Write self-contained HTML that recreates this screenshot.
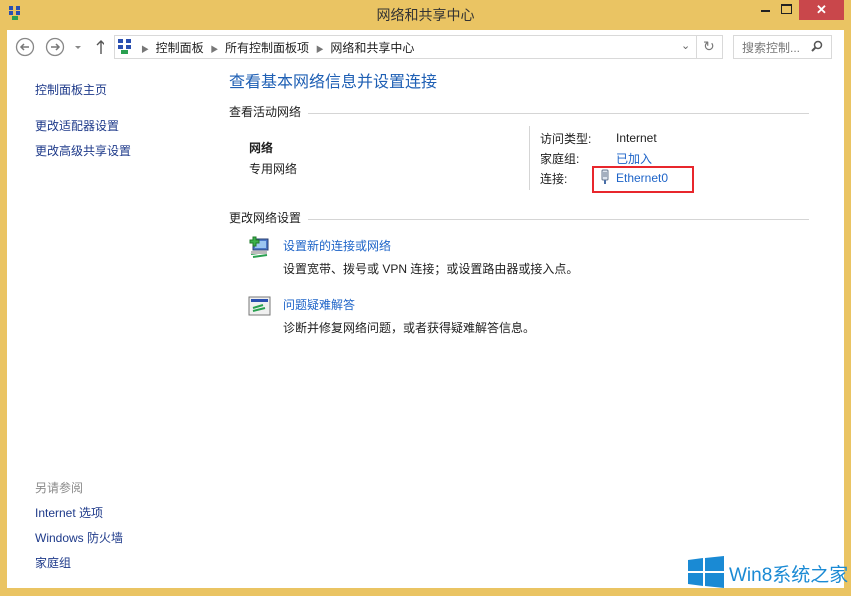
<!DOCTYPE html>
<html><head><meta charset="utf-8"><style>
body{margin:0;width:851px;height:596px;background:#eac463;position:relative;overflow:hidden;font-family:"Liberation Sans","Microsoft YaHei","Noto Sans CJK SC",sans-serif;font-size:12px;color:#1e1e1e}
.a{position:absolute;white-space:nowrap}
#client{position:absolute;left:7px;top:30px;width:837px;height:558px;background:#fff}
.blue{color:#1e64c8}
.nav{color:#1e3a8a;font-size:12px}
.hr{position:absolute;height:1px;background:#d5d5d5}
</style></head><body>
<div class="a" style="left:8px;top:5px;width:14px;height:16px">
<svg width="14" height="16"><rect x="1" y="1" width="4" height="4" fill="#2a4fb0"/><rect x="8" y="1" width="4" height="4" fill="#2a4fb0"/><rect x="1" y="6" width="4" height="4" fill="#2a4fb0"/><rect x="8" y="6" width="4" height="4" fill="#2a4fb0"/><rect x="4" y="11" width="6" height="4" fill="#2aa050"/></svg></div>
<div class="a" style="left:0;width:851px;top:5px;text-align:center;font-size:14px;color:#333">网络和共享中心</div>
<div class="a" style="left:761px;top:10px;width:9px;height:2px;background:#222"></div>
<div class="a" style="left:781px;top:4px;width:9px;height:7px;border:1px solid #222;border-top-width:2px"></div>
<div class="a" style="left:799px;top:0;width:45px;height:20px;background:#c9474b;color:#fff;text-align:center;font-size:13px;line-height:19px;font-weight:bold">✕</div>
<div id="client"></div>
<svg class="a" style="left:14px;top:36px" width="90" height="22"><circle cx="11" cy="11" r="8.5" fill="none" stroke="#888" stroke-width="1.3"/><path d="M15 11H7M10 8L7 11L10 14" fill="none" stroke="#777" stroke-width="1.5"/><circle cx="41" cy="11" r="8.5" fill="none" stroke="#888" stroke-width="1.3"/><path d="M37 11H45M42 8L45 11L42 14" fill="none" stroke="#777" stroke-width="1.5"/><path d="M61 10h6l-3 3z" fill="#888"/><path d="M87 18V5M83 9L87 5L91 9" fill="none" stroke="#555" stroke-width="1.4"/></svg>
<div class="a" style="left:114px;top:35px;width:607px;height:22px;border:1px solid #d9d9d9"></div>
<div class="a" style="left:696px;top:35px;width:1px;height:24px;background:#d9d9d9"></div>
<svg class="a" style="left:117px;top:38px" width="16" height="18"><rect x="1" y="1" width="5" height="4" fill="#2a4fb0"/><rect x="9" y="1" width="5" height="4" fill="#2a4fb0"/><rect x="1" y="7" width="5" height="4" fill="#2a4fb0"/><rect x="9" y="7" width="5" height="4" fill="#2a4fb0"/><rect x="4" y="12" width="7" height="4" fill="#2aa050"/></svg>
<div class="a" style="left:141px;top:39px;font-size:12px"><span style="color:#777;font-size:8px">▶</span>&nbsp; 控制面板 &nbsp;<span style="color:#777;font-size:8px">▶</span>&nbsp; 所有控制面板项 &nbsp;<span style="color:#777;font-size:8px">▶</span>&nbsp; 网络和共享中心</div>
<div class="a" style="left:681px;top:39px;color:#666;font-size:11px">⌄</div>
<div class="a" style="left:703px;top:38px;color:#777;font-size:14px">↻</div>
<div class="a" style="left:733px;top:35px;width:97px;height:22px;border:1px solid #d9d9d9"></div>
<div class="a" style="left:742px;top:39px;color:#777">搜索控制...</div>
<svg class="a" style="left:811px;top:40px" width="12" height="12"><circle cx="7" cy="5" r="3.5" fill="none" stroke="#555" stroke-width="1.5"/><path d="M4.5 7.5L1 11" stroke="#555" stroke-width="2"/></svg>

<div class="a nav" style="left:35px;top:81px">控制面板主页</div>
<div class="a nav" style="left:35px;top:117px">更改适配器设置</div>
<div class="a nav" style="left:35px;top:142px">更改高级共享设置</div>
<div class="a" style="left:35px;top:479px;color:#8a8a8a">另请参阅</div>
<div class="a nav" style="left:35px;top:504px">Internet 选项</div>
<div class="a nav" style="left:35px;top:529px">Windows 防火墙</div>
<div class="a nav" style="left:35px;top:554px">家庭组</div>

<div class="a" style="left:229px;top:68px;font-size:16px;color:#1e5fb4">查看基本网络信息并设置连接</div>
<div class="a" style="left:229px;top:103px">查看活动网络</div>
<div class="hr" style="left:308px;top:113px;width:501px"></div>
<div class="a" style="left:249px;top:139px;font-weight:bold">网络</div>
<div class="a" style="left:249px;top:160px">专用网络</div>
<div class="a" style="left:529px;top:126px;width:1px;height:64px;background:#d5d5d5"></div>
<div class="a" style="left:540px;top:130px">访问类型:</div>
<div class="a" style="left:616px;top:131px">Internet</div>
<div class="a" style="left:540px;top:150px">家庭组:</div>
<div class="a blue" style="left:616px;top:150px">已加入</div>
<div class="a" style="left:540px;top:170px">连接:</div>
<div class="a" style="left:592px;top:166px;width:98px;height:23px;border:2px solid #e8262c"></div>
<svg class="a" style="left:600px;top:169px" width="10" height="16"><rect x="2" y="1" width="6" height="10" rx="1" fill="#dde4ee" stroke="#6a7a90"/><path d="M4 3v5M6 3v5" stroke="#6a7a90"/><rect x="4" y="11" width="2" height="4" fill="#4a6fa8"/></svg>
<div class="a blue" style="left:616px;top:171px">Ethernet0</div>
<div class="a" style="left:229px;top:209px">更改网络设置</div>
<div class="hr" style="left:308px;top:219px;width:501px"></div>
<svg class="a" style="left:247px;top:236px" width="24" height="24"><rect x="6" y="3" width="15" height="11" fill="#4b78c8" stroke="#2a3f70"/><rect x="8" y="5" width="11" height="7" fill="#9cc6f0"/><path d="M3 4h3v-3h3v3h3v3h-3v3h-3v-3h-3z" fill="#3bb24a" stroke="#1f7a2a"/><path d="M4 18l14 -2M6 21l14-2" stroke="#2aa050" stroke-width="2"/><rect x="4" y="15" width="16" height="3" fill="#bbb"/></svg>
<div class="a blue" style="left:283px;top:237px">设置新的连接或网络</div>
<div class="a" style="left:283px;top:260px">设置宽带、拨号或 VPN 连接；或设置路由器或接入点。</div>
<svg class="a" style="left:248px;top:296px" width="24" height="22"><rect x="1" y="1" width="21" height="18" fill="#f0f0f0" stroke="#777"/><rect x="3" y="3" width="17" height="3" fill="#2a4fb0"/><path d="M5 12l10-3M5 15l12-3" stroke="#2aa050" stroke-width="2"/></svg>
<div class="a blue" style="left:283px;top:296px">问题疑难解答</div>
<div class="a" style="left:283px;top:319px">诊断并修复网络问题，或者获得疑难解答信息。</div>

<svg class="a" style="left:688px;top:556px" width="36" height="32"><path d="M0 4l15-2v13H0zM17 2l19-2v15H17zM0 17h15v13L0 28zM17 17h19v15l-19-2z" fill="#1a8ad4"/></svg>
<div class="a" style="left:729px;top:560px;font-size:19px;color:#1a8ad4">Win8系统之家</div>
</body></html>
